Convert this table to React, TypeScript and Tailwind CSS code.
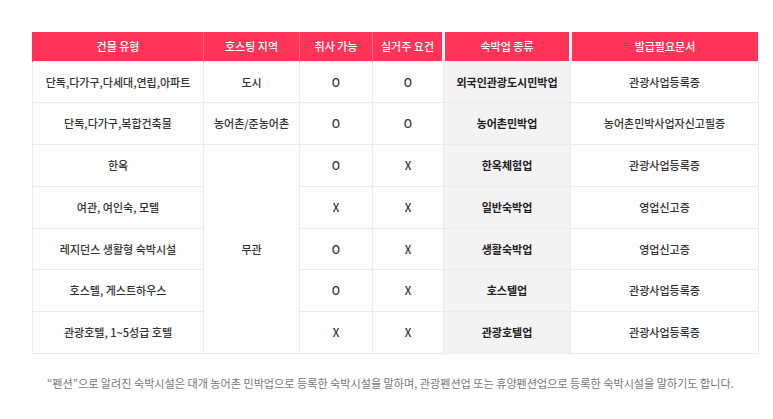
const rows = [
  { type: "단독,다가구,다세대,연립,아파트", region: "도시", cook: "O", live: "O", kind: "외국인관광도시민박업", doc: "관광사업등록증" },
  { type: "단독,다가구,복합건축물", region: "농어촌/준농어촌", cook: "O", live: "O", kind: "농어촌민박업", doc: "농어촌민박사업자신고필증" },
  { type: "한옥", region: "무관", cook: "O", live: "X", kind: "한옥체험업", doc: "관광사업등록증" },
  { type: "여관, 여인숙, 모텔", cook: "X", live: "X", kind: "일반숙박업", doc: "영업신고증" },
  { type: "레지던스 생활형 숙박시설", cook: "O", live: "X", kind: "생활숙박업", doc: "영업신고증" },
  { type: "호스텔, 게스트하우스", cook: "O", live: "X", kind: "호스텔업", doc: "관광사업등록증" },
  { type: "관광호텔, 1~5성급 호텔", cook: "X", live: "X", kind: "관광호텔업", doc: "관광사업등록증" },
];

const font = { fontFamily: '"Noto Sans CJK KR", "Noto Sans", sans-serif' };

export default function App() {
  const th = "h-[29px] bg-[#ff3458] text-[11px] font-medium text-white border-x border-[#ff7088]";
  const td = "h-[41.75px] border border-[#ebebeb] text-[11px] font-medium text-[#333] bg-[#fefdfd]";

  return (
    <div className="min-h-[419px] w-[773px] bg-white pt-[32px]" style={font}>
      <table className="ml-[32px] w-[726px] table-fixed border-collapse text-center">
        <colgroup>
          <col className="w-[171px]" />
          <col className="w-[96px]" />
          <col className="w-[73px]" />
          <col className="w-[71px]" />
          <col className="w-[127px]" />
          <col className="w-[188px]" />
        </colgroup>
        <thead>
          <tr>
            <th className={`${th} border-l-[#ff3458]`}>건물 유형</th>
            <th className={th}>호스팅 지역</th>
            <th className={th}>취사 가능</th>
            <th className={th}>실거주 요건</th>
            <th className="h-[29px] bg-[#ff3458] text-[11px] font-medium text-white border-x-[3.5px] border-[#f8f8f8]">숙박업 종류</th>
            <th className="h-[29px] bg-[#ff3458] text-[11px] font-medium text-white border-r border-[#f3f3f3]">발급필요문서</th>
          </tr>
        </thead>
        <tbody>
          {rows.map((r, i) => (
            <tr key={r.type}>
              <td className={td}>{r.type}</td>
              {i < 2 && <td className={td}>{r.region}</td>}
              {i === 2 && (
                <td className={td} rowSpan={5}>
                  {r.region}
                </td>
              )}
              <td className={td}>{r.cook}</td>
              <td className={td}>{r.live}</td>
              <td className="h-[41.75px] border-y border-[#ebebeb] bg-[#f3f3f3] text-[11px] font-bold text-[#222]">{r.kind}</td>
              <td className={td}>{r.doc}</td>
            </tr>
          ))}
        </tbody>
      </table>
      <p className="ml-[47px] mt-[21px] text-[11.1px] text-[#777]">
        “펜션”으로 알려진 숙박시설은 대개 농어촌 민박업으로 등록한 숙박시설을 말하며, 관광펜션업 또는 휴양펜션업으로 등록한 숙박시설을 말하기도 합니다.
      </p>
    </div>
  );
}
